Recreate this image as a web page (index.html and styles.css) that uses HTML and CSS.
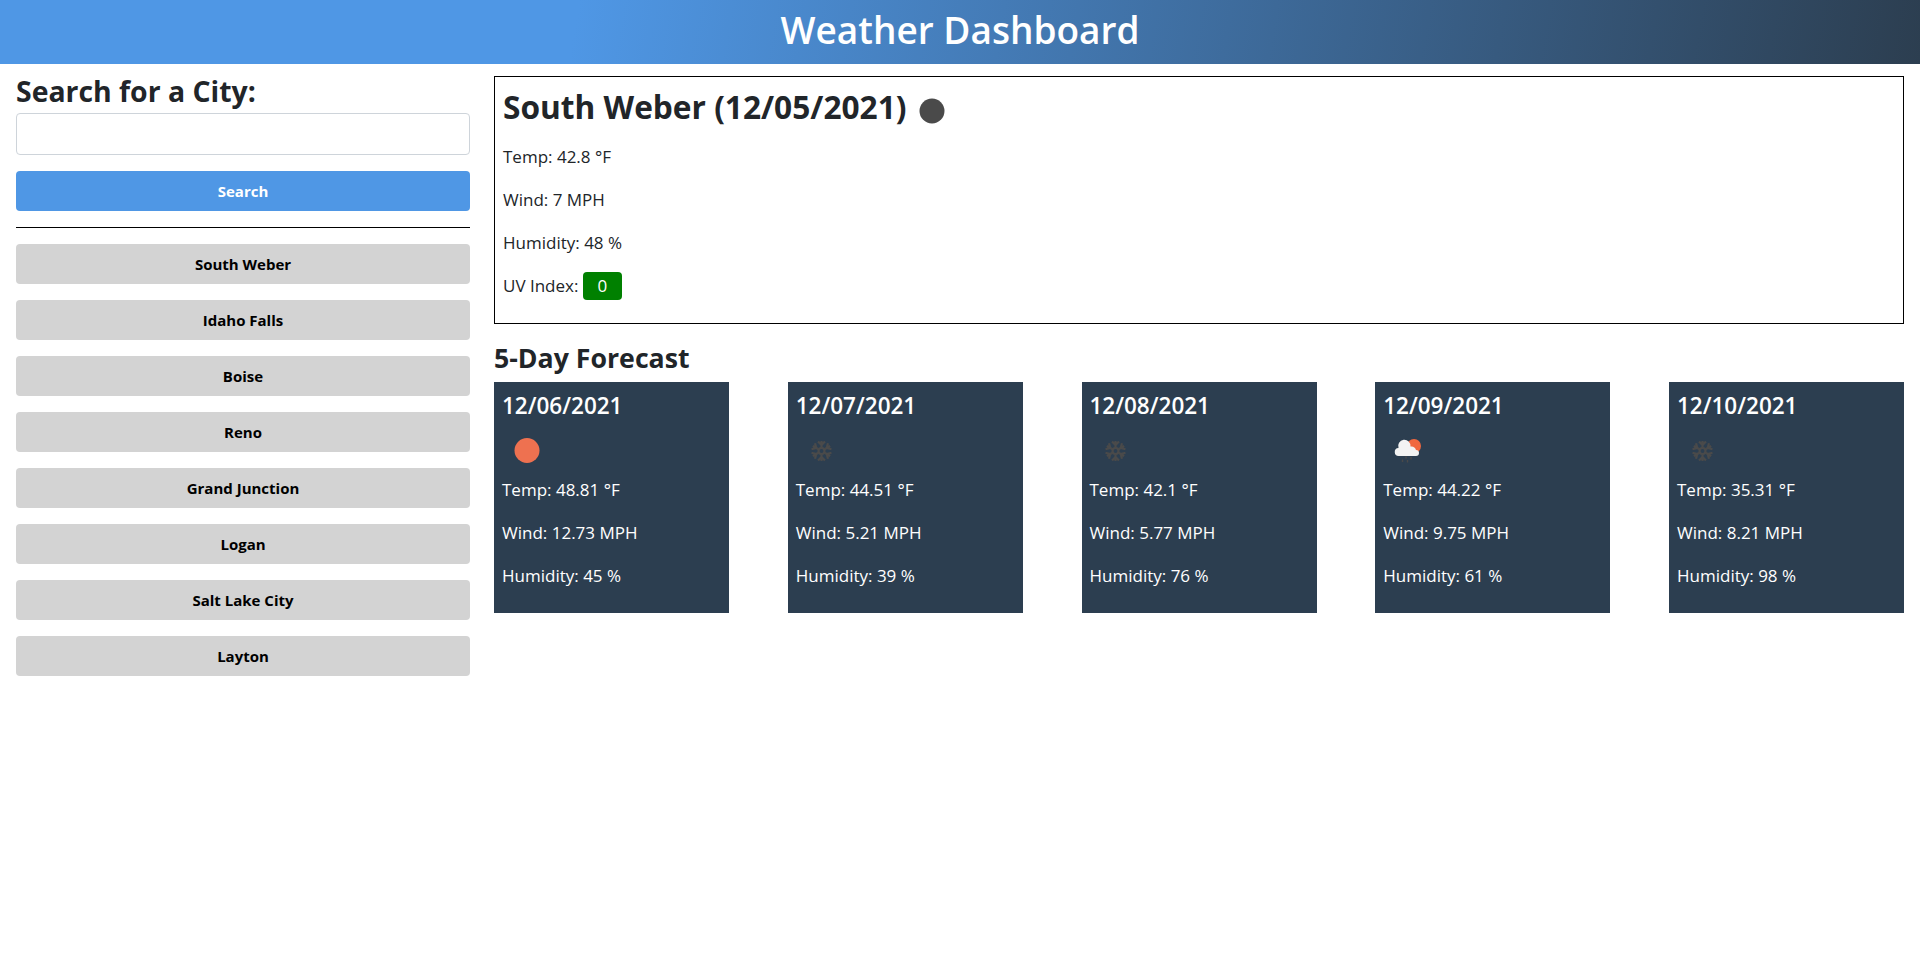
FILE: index.html
```html
<!DOCTYPE html>
<html lang="en">
<head>
    <meta charset="UTF-8">
    <meta name="viewport" content="width=device-width, initial-scale=1.0">
    <title>Weather Dashboard</title>
    <link rel="stylesheet" href="styles.css">
</head>
<body>
    <header class="top_bar">
        <h1>Weather Dashboard</h1>
    </header>

    <div class="page_wrap">
        <aside class="search_col">
            <h3 class="search_title">Search for a City:</h3>
            <input type="text" class="city_input">
            <button class="btn btn_search">Search</button>
            <hr class="divider">
            <ul class="history">
                <li><button class="btn btn_city">South Weber</button></li>
                <li><button class="btn btn_city">Idaho Falls</button></li>
                <li><button class="btn btn_city">Boise</button></li>
                <li><button class="btn btn_city">Reno</button></li>
                <li><button class="btn btn_city">Grand Junction</button></li>
                <li><button class="btn btn_city">Logan</button></li>
                <li><button class="btn btn_city">Salt Lake City</button></li>
                <li><button class="btn btn_city">Layton</button></li>
            </ul>
        </aside>

        <main class="weather_col">
            <section class="current">
                <h2 class="current_title">
                    South Weber (12/05/2021)
                    <svg class="icon icon_current" viewBox="0 0 50 50"><circle cx="25" cy="25" r="12.5" fill="#4a4a4a"/></svg>
                </h2>
                <p>Temp: 42.8 °F</p>
                <p>Wind: 7 MPH</p>
                <p>Humidity: 48 %</p>
                <p>UV Index: <span class="uv">0</span></p>
            </section>

            <h3 class="forecast_title">5-Day Forecast</h3>
            <div class="forecast">
                <div class="card">
                    <h4>12/06/2021</h4>
                    <svg class="icon" viewBox="0 0 50 50"><circle cx="25" cy="25.500" r="12.500" fill="#ee7150"/></svg>
                    <p>Temp: 48.81 °F</p>
                    <p>Wind: 12.73 MPH</p>
                    <p>Humidity: 45 %</p>
                </div>
                <div class="card">
                    <h4>12/07/2021</h4>
                    <svg class="icon" viewBox="0 0 50 50"><use href="#flake"/></svg>
                    <p>Temp: 44.51 °F</p>
                    <p>Wind: 5.21 MPH</p>
                    <p>Humidity: 39 %</p>
                </div>
                <div class="card">
                    <h4>12/08/2021</h4>
                    <svg class="icon" viewBox="0 0 50 50"><use href="#flake"/></svg>
                    <p>Temp: 42.1 °F</p>
                    <p>Wind: 5.77 MPH</p>
                    <p>Humidity: 76 %</p>
                </div>
                <div class="card">
                    <h4>12/09/2021</h4>
                    <svg class="icon" viewBox="0 0 50 50">
                        <circle cx="31" cy="21" r="7" fill="#f0683f"/>
                        <path d="M16 31A4 4 0 0 1 15.500 23A6.200 6.200 0 1 1 27.500 21.500A5 5 0 0 1 33 25A3 3 0 0 1 33 31Z" fill="#f3f3f3"/>
                        <path d="M23 31.500v2M19.500 34.500v2.500M24.500 35v2.500M28 32v2.500" stroke="#4a4a4a" stroke-width="1.400" fill="none"/>
                    </svg>
                    <p>Temp: 44.22 °F</p>
                    <p>Wind: 9.75 MPH</p>
                    <p>Humidity: 61 %</p>
                </div>
                <div class="card">
                    <h4>12/10/2021</h4>
                    <svg class="icon" viewBox="0 0 50 50"><use href="#flake"/></svg>
                    <p>Temp: 35.31 °F</p>
                    <p>Wind: 8.21 MPH</p>
                    <p>Humidity: 98 %</p>
                </div>
            </div>
        </main>
    </div>

    <!-- snowflake shared by the forecast cards -->
    <svg class="defs" width="0" height="0">
        <symbol id="flake" viewBox="0 0 50 50">
            <g stroke="#4a4a4a" stroke-width="2.200" fill="none" transform="translate(.5 1)">
                <path d="M25 22V15M25 19l-3.500-3.500M25 19l3.500-3.500"/>
                <path d="M25 22V15M25 19l-3.500-3.500M25 19l3.500-3.500" transform="rotate(60 25 25)"/>
                <path d="M25 22V15M25 19l-3.500-3.500M25 19l3.500-3.500" transform="rotate(120 25 25)"/>
                <path d="M25 22V15M25 19l-3.500-3.500M25 19l3.500-3.500" transform="rotate(180 25 25)"/>
                <path d="M25 22V15M25 19l-3.500-3.500M25 19l3.500-3.500" transform="rotate(240 25 25)"/>
                <path d="M25 22V15M25 19l-3.500-3.500M25 19l3.500-3.500" transform="rotate(300 25 25)"/>
                <circle cx="25" cy="25" r="3"/>
            </g>
        </symbol>
    </svg>
</body>
</html>
```

FILE: styles.css
```css
* {
    box-sizing: border-box;
}
body {
    margin: 0;
    font-family: "Open Sans", "Noto Sans", sans-serif;
    font-size: 17px;
    line-height: 27px;
    color: #212529;
    background: #fff;
}
h1, h2, h3, h4, p, ul {
    margin: 0;
    padding: 0;
}
li {
    list-style: none;
}
.defs {
    position: absolute;
}

.top_bar {
    height: 64px;
    background: linear-gradient(100deg, #4f97e5 30%, #2c3e50 100%);
    color: #fff;
    text-align: center;
}
.top_bar h1 {
    font-size: 37px;
    font-weight: 600;
    line-height: 60px;
}

.page_wrap {
    display: flex;
}
.search_col {
    width: 480px;
    padding: 12px 10px 0 16px;
}
.search_title {
    font-size: 28.400px;
    font-weight: 700;
    line-height: 30px;
    margin-bottom: 7px;
}
.city_input {
    display: block;
    width: 100%;
    height: 42px;
    margin-bottom: 16px;
    border: 1px solid #ced4da;
    border-radius: 4px;
    background: #fff;
}
.btn {
    display: block;
    width: 100%;
    height: 40px;
    border: 0;
    border-radius: 4px;
    font-family: inherit;
    font-size: 15px;
    font-weight: 700;
}
.btn_search {
    background: #4f97e5;
    color: #fff;
}
.btn_city {
    background: #d3d3d3;
    color: #000;
}
.divider {
    margin: 16px 0;
    border: 0;
    border-top: 1px solid #000;
}
.history {
    display: flex;
    flex-direction: column;
    gap: 16px;
}

.weather_col {
    flex: 1;
    padding: 12px 16px 0 14px;
}
.current {
    height: 248px;
    padding: 8px;
    border: 1px solid #000;
}
.current_title {
    display: flex;
    align-items: center;
    height: 42px;
    font-size: 31.650px;
    font-weight: 700;
    margin-bottom: 16px;
}
.current p, .card p {
    margin-bottom: 16px;
}
.icon {
    display: block;
    width: 50px;
    height: 50px;
}
.icon_current {
    margin-top: 10px;
    margin-left: 1px;
}
.uv {
    display: inline-block;
    width: 39px;
    height: 28px;
    border-radius: 4px;
    background: green;
    color: #fff;
    text-align: center;
}

.forecast_title {
    margin-top: 17px;
    margin-bottom: 7px;
    font-size: 26.700px;
    font-weight: 700;
    line-height: 34px;
}
.forecast {
    display: flex;
    justify-content: space-between;
}
.card {
    width: 235px;
    height: 231px;
    padding: 8px;
    background: #2c3e50;
    color: #fff;
}
.card h4 {
    font-size: 22.500px;
    font-weight: 600;
    line-height: 31px;
    margin-bottom: 4px;
}
.card .icon {
    margin-bottom: 1px;
}
.card p:last-child {
    margin-bottom: 0;
}
```
